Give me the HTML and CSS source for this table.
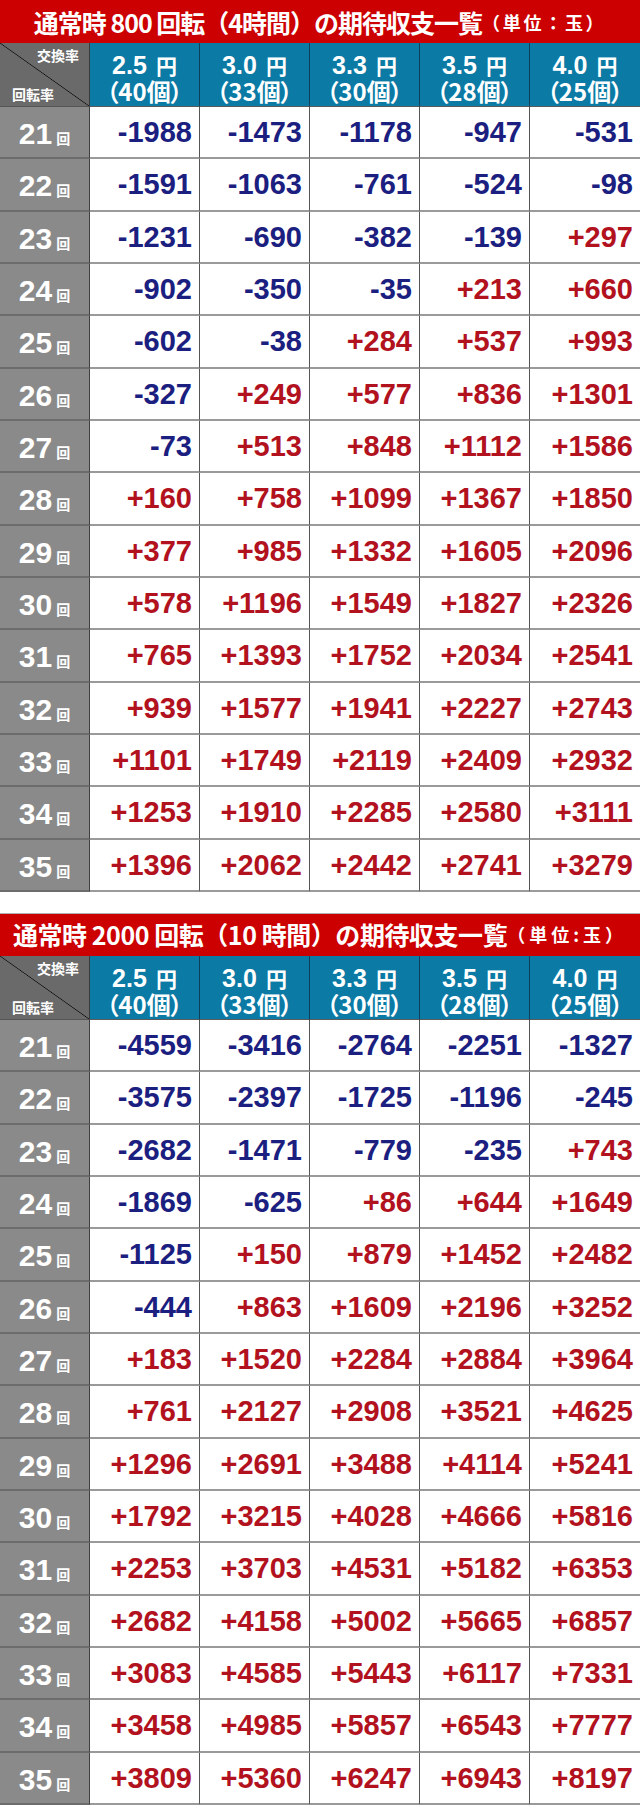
FILE: index.html
```html
<!DOCTYPE html>
<html lang="ja">
<head>
<meta charset="utf-8">
<title>期待収支一覧</title>
<link rel="stylesheet" href="styles.css">
</head>
<body>
<section class="block">
  <h2 class="title"><span class="main">通常時 800 回転（4時間）の期待収支一覧</span><span class="unit">（単位：玉）</span></h2>
  <div class="grid">
    <div class="corner"><span class="c-top">交換率</span><span class="c-bot">回転率</span></div>
    <div class="hd"><span class="rate">2.5<small>円</small></span><span class="cnt">（40個）</span></div>
    <div class="hd"><span class="rate">3.0<small>円</small></span><span class="cnt">（33個）</span></div>
    <div class="hd"><span class="rate">3.3<small>円</small></span><span class="cnt">（30個）</span></div>
    <div class="hd"><span class="rate">3.5<small>円</small></span><span class="cnt">（28個）</span></div>
    <div class="hd"><span class="rate">4.0<small>円</small></span><span class="cnt">（25個）</span></div>

    <div class="lb">21<small>回</small></div><div class="v n">-1988</div><div class="v n">-1473</div><div class="v n">-1178</div><div class="v n">-947</div><div class="v n">-531</div>
    <div class="lb">22<small>回</small></div><div class="v n">-1591</div><div class="v n">-1063</div><div class="v n">-761</div><div class="v n">-524</div><div class="v n">-98</div>
    <div class="lb">23<small>回</small></div><div class="v n">-1231</div><div class="v n">-690</div><div class="v n">-382</div><div class="v n">-139</div><div class="v p">+297</div>
    <div class="lb">24<small>回</small></div><div class="v n">-902</div><div class="v n">-350</div><div class="v n">-35</div><div class="v p">+213</div><div class="v p">+660</div>
    <div class="lb">25<small>回</small></div><div class="v n">-602</div><div class="v n">-38</div><div class="v p">+284</div><div class="v p">+537</div><div class="v p">+993</div>
    <div class="lb">26<small>回</small></div><div class="v n">-327</div><div class="v p">+249</div><div class="v p">+577</div><div class="v p">+836</div><div class="v p">+1301</div>
    <div class="lb">27<small>回</small></div><div class="v n">-73</div><div class="v p">+513</div><div class="v p">+848</div><div class="v p">+1112</div><div class="v p">+1586</div>
    <div class="lb">28<small>回</small></div><div class="v p">+160</div><div class="v p">+758</div><div class="v p">+1099</div><div class="v p">+1367</div><div class="v p">+1850</div>
    <div class="lb">29<small>回</small></div><div class="v p">+377</div><div class="v p">+985</div><div class="v p">+1332</div><div class="v p">+1605</div><div class="v p">+2096</div>
    <div class="lb">30<small>回</small></div><div class="v p">+578</div><div class="v p">+1196</div><div class="v p">+1549</div><div class="v p">+1827</div><div class="v p">+2326</div>
    <div class="lb">31<small>回</small></div><div class="v p">+765</div><div class="v p">+1393</div><div class="v p">+1752</div><div class="v p">+2034</div><div class="v p">+2541</div>
    <div class="lb">32<small>回</small></div><div class="v p">+939</div><div class="v p">+1577</div><div class="v p">+1941</div><div class="v p">+2227</div><div class="v p">+2743</div>
    <div class="lb">33<small>回</small></div><div class="v p">+1101</div><div class="v p">+1749</div><div class="v p">+2119</div><div class="v p">+2409</div><div class="v p">+2932</div>
    <div class="lb">34<small>回</small></div><div class="v p">+1253</div><div class="v p">+1910</div><div class="v p">+2285</div><div class="v p">+2580</div><div class="v p">+3111</div>
    <div class="lb">35<small>回</small></div><div class="v p">+1396</div><div class="v p">+2062</div><div class="v p">+2442</div><div class="v p">+2741</div><div class="v p">+3279</div>
  </div>
</section>

<section class="block second">
  <h2 class="title"><span class="main">通常時 2000 回転（10 時間）の期待収支一覧</span><span class="unit unit2">（単位:玉）</span></h2>
  <div class="grid">
    <div class="corner"><span class="c-top">交換率</span><span class="c-bot">回転率</span></div>
    <div class="hd"><span class="rate">2.5<small>円</small></span><span class="cnt">（40個）</span></div>
    <div class="hd"><span class="rate">3.0<small>円</small></span><span class="cnt">（33個）</span></div>
    <div class="hd"><span class="rate">3.3<small>円</small></span><span class="cnt">（30個）</span></div>
    <div class="hd"><span class="rate">3.5<small>円</small></span><span class="cnt">（28個）</span></div>
    <div class="hd"><span class="rate">4.0<small>円</small></span><span class="cnt">（25個）</span></div>

    <div class="lb">21<small>回</small></div><div class="v n">-4559</div><div class="v n">-3416</div><div class="v n">-2764</div><div class="v n">-2251</div><div class="v n">-1327</div>
    <div class="lb">22<small>回</small></div><div class="v n">-3575</div><div class="v n">-2397</div><div class="v n">-1725</div><div class="v n">-1196</div><div class="v n">-245</div>
    <div class="lb">23<small>回</small></div><div class="v n">-2682</div><div class="v n">-1471</div><div class="v n">-779</div><div class="v n">-235</div><div class="v p">+743</div>
    <div class="lb">24<small>回</small></div><div class="v n">-1869</div><div class="v n">-625</div><div class="v p">+86</div><div class="v p">+644</div><div class="v p">+1649</div>
    <div class="lb">25<small>回</small></div><div class="v n">-1125</div><div class="v p">+150</div><div class="v p">+879</div><div class="v p">+1452</div><div class="v p">+2482</div>
    <div class="lb">26<small>回</small></div><div class="v n">-444</div><div class="v p">+863</div><div class="v p">+1609</div><div class="v p">+2196</div><div class="v p">+3252</div>
    <div class="lb">27<small>回</small></div><div class="v p">+183</div><div class="v p">+1520</div><div class="v p">+2284</div><div class="v p">+2884</div><div class="v p">+3964</div>
    <div class="lb">28<small>回</small></div><div class="v p">+761</div><div class="v p">+2127</div><div class="v p">+2908</div><div class="v p">+3521</div><div class="v p">+4625</div>
    <div class="lb">29<small>回</small></div><div class="v p">+1296</div><div class="v p">+2691</div><div class="v p">+3488</div><div class="v p">+4114</div><div class="v p">+5241</div>
    <div class="lb">30<small>回</small></div><div class="v p">+1792</div><div class="v p">+3215</div><div class="v p">+4028</div><div class="v p">+4666</div><div class="v p">+5816</div>
    <div class="lb">31<small>回</small></div><div class="v p">+2253</div><div class="v p">+3703</div><div class="v p">+4531</div><div class="v p">+5182</div><div class="v p">+6353</div>
    <div class="lb">32<small>回</small></div><div class="v p">+2682</div><div class="v p">+4158</div><div class="v p">+5002</div><div class="v p">+5665</div><div class="v p">+6857</div>
    <div class="lb">33<small>回</small></div><div class="v p">+3083</div><div class="v p">+4585</div><div class="v p">+5443</div><div class="v p">+6117</div><div class="v p">+7331</div>
    <div class="lb">34<small>回</small></div><div class="v p">+3458</div><div class="v p">+4985</div><div class="v p">+5857</div><div class="v p">+6543</div><div class="v p">+7777</div>
    <div class="lb">35<small>回</small></div><div class="v p">+3809</div><div class="v p">+5360</div><div class="v p">+6247</div><div class="v p">+6943</div><div class="v p">+8197</div>
  </div>
</section>
</body>
</html>
```

FILE: styles.css
```css
html, body {
  margin: 0;
  padding: 0;
  background: #ffffff;
}

body {
  width: 640px;
  font-family: "Liberation Sans", Arial, "Noto Sans CJK JP", sans-serif;
}

.block {
  width: 640px;
}

.second {
  margin-top: 21px;
}

.title {
  margin: 0;
  height: 43px;
  background: #cc0000;
  color: #ffffff;
  display: flex;
  align-items: center;
  justify-content: center;
  font-family: "Noto Sans CJK JP", sans-serif;
  font-weight: 700;
  white-space: nowrap;
  line-height: 30px;
}

.title .main {
  font-size: 25px;
  letter-spacing: -1px;
}

.second .title .main {
  letter-spacing: -0.45px;
}

.title .unit {
  font-size: 18px;
  letter-spacing: 2.7px;
  margin-left: 0;
}

.title .unit2 {
  letter-spacing: 4px;
}

.second .title {
  box-shadow: inset 0 1px 0 #b0b0b0;
}

.grid {
  display: grid;
  grid-template-columns: 90px repeat(5, 110px);
  grid-template-rows: 64px;
  grid-auto-rows: 52.33px;
}

.corner {
  background: #6a6a6a;
  color: #ffffff;
  font-family: "Noto Sans CJK JP", sans-serif;
  font-weight: 700;
  font-size: 14px;
  line-height: 16px;
  display: flex;
  flex-direction: column;
  justify-content: space-between;
  padding: 4px 10px 4px 12px;
  box-sizing: border-box;
  background-image: linear-gradient(to top right, transparent calc(50% - 0.7px), #111 50%, transparent calc(50% + 0.7px));
  border-right: 1px solid #3a3a3a;
  border-bottom: 1px solid #555;
}

.c-top {
  align-self: flex-end;
}

.c-bot {
  align-self: flex-start;
}

.hd {
  background: #0b7aa5;
  color: #ffffff;
  display: flex;
  flex-direction: column;
  align-items: center;
  justify-content: flex-start;
  border-right: 1px solid #0b3f5c;
  border-bottom: 1px solid #5b5b5b;
  box-sizing: border-box;
  font-weight: 700;
  padding-top: 10px;
}

.hd:nth-child(6) {
  border-right: none;
}

.hd .rate {
  font-family: "Liberation Sans", Arial, sans-serif;
  font-size: 25px;
  line-height: 25px;
  height: 25px;
  display: flex;
  align-items: baseline;
}

.hd .rate small {
  font-family: "Noto Sans CJK JP", sans-serif;
  font-size: 21px;
  margin-left: 9px;
}

.hd .cnt {
  font-family: "Noto Sans CJK JP", sans-serif;
  font-size: 24px;
  line-height: 24px;
  height: 24px;
  margin-top: 1px;
  font-feature-settings: "palt";
}

.lb {
  background: #8a8a8a;
  color: #ffffff;
  font-weight: 700;
  font-size: 30px;
  display: flex;
  align-items: baseline;
  justify-content: center;
  padding-top: 12px;
  box-sizing: border-box;
  border-right: 1px solid #3f3f3f;
  border-bottom: 2px solid #6c6c6c;
  line-height: 30px;
}

.lb small {
  font-family: "Noto Sans CJK JP", sans-serif;
  font-size: 14px;
  line-height: 16px;
  margin-left: 4px;
}

.v {
  font-weight: 700;
  font-size: 29px;
  display: flex;
  align-items: center;
  justify-content: flex-end;
  padding-right: 7px;
  box-sizing: border-box;
  border-right: 1px solid #555;
  border-bottom: 2px solid #9a9a9a;
  line-height: 32px;
}

.v:nth-child(6n) {
  border-right: none;
}

.n {
  color: #1b2080;
}

.p {
  color: #b2111e;
}
```
